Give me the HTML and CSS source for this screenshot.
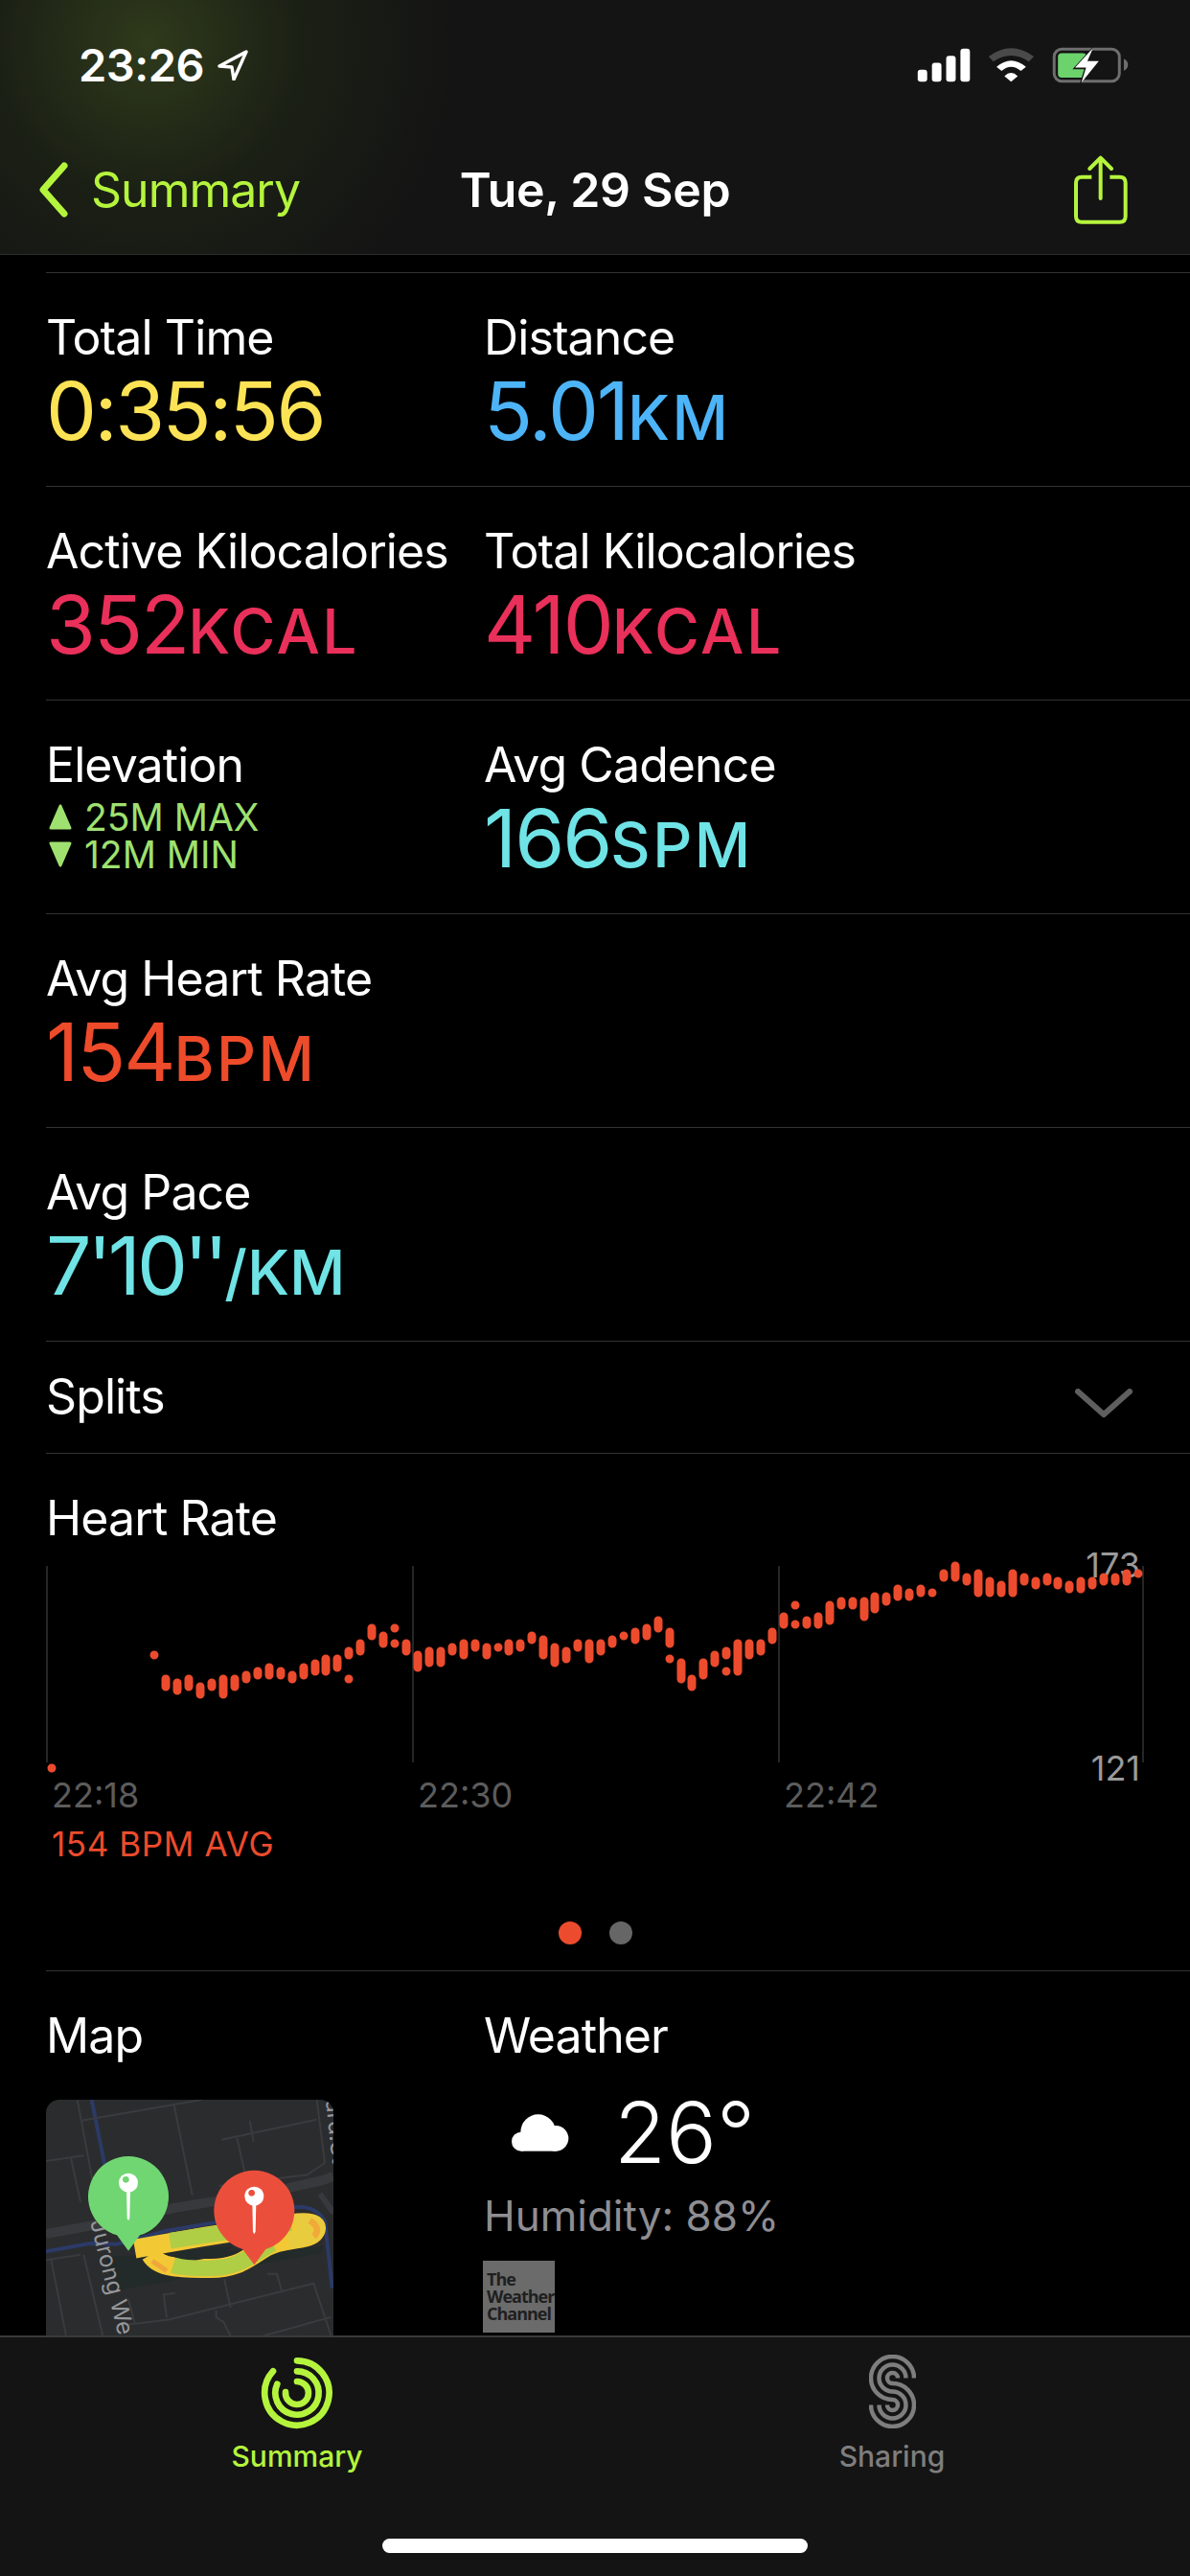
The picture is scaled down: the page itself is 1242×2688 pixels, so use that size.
FILE: index.html
```html
<!DOCTYPE html>
<html lang="en">
<head>
  <meta charset="UTF-8" />
  <meta name="viewport" content="width=device-width, initial-scale=1.0" />
  <title>Workout Summary</title>
  <link rel="stylesheet" href="styles.css">
</head>
<body>
  <div class="screen">
    <header class="top">
      <div class="status">
        <div class="clock">
          <span>23:26</span>
          <svg class="arrow-icon" viewBox="0 0 32 32"><path d="M30 2 L2 17 L15 18 L17 31 Z" fill="none" stroke="#fff" stroke-width="3.4" stroke-linejoin="round"/></svg>
        </div>
        <svg class="status-icons" viewBox="171 85 664 115">
          <rect x="171" y="157" width="30" height="38" rx="9" fill="#fff"/>
          <rect x="216" y="135" width="30" height="60" rx="9" fill="#fff"/>
          <rect x="261" y="113" width="30" height="82" rx="9" fill="#fff"/>
          <rect x="306" y="90" width="30" height="105" rx="9" fill="#fff"/>
          <path d="M395 115 Q466 62 538 115 L522 131 Q466 93 410 131 Z" fill="#4a4a4a"/>
          <path d="M420 148 Q466 108 513 148 L497 161 Q466 135 436 161 Z" fill="#fff"/>
          <path d="M445 177 Q466 157 487 177 L466 195 Z" fill="#fff"/>
          <rect x="602" y="92" width="206" height="101" rx="24" fill="none" stroke="#6e6e6e" stroke-width="9"/>
          <path d="M822 122 Q835 128 835 141 Q835 154 822 160 Z" fill="#6e6e6e"/>
          <rect x="614" y="105" width="90" height="77" rx="12" fill="#6bd26c"/>
          <path d="M727 82 L660 155 L697 155 L682 204 L751 126 L713 126 Z" fill="#141414"/>
          <path d="M725 88 L668 150 L703 150 L688 198 L743 130 L707 130 Z" fill="#fff"/>
        </svg>
      </div>
      <nav class="nav">
        <div class="nav-back">
          <svg class="chevron" viewBox="0 0 34 58"><path d="M28 4 L6 29 L28 54" fill="none" stroke="#b5f43d" stroke-width="7" stroke-linecap="round" stroke-linejoin="round"/></svg>
          <span>Summary</span>
        </div>
        <div class="nav-title">Tue, 29 Sep</div>
        <svg class="share" viewBox="658 420 168 216">
          <path d="M713 488 H682 Q664 488 664 506 V611 Q664 629 682 629 H801 Q819 629 819 611 V506 Q819 488 801 488 H770" fill="none" stroke="#b5f43d" stroke-width="12"/>
          <path d="M741 432 V555 M707 462 L741 428 L775 462" fill="none" stroke="#b5f43d" stroke-width="12" stroke-linecap="round" stroke-linejoin="round"/>
        </svg>
      </nav>
    </header>

    <main class="content">
      <section class="row">
        <div class="cell">
          <div class="label">Total Time</div>
          <div class="value yellow time-value">0:35:56</div>
        </div>
        <div class="cell">
          <div class="label">Distance</div>
          <div class="value blue">5.01<span class="unit">KM</span></div>
        </div>
      </section>

      <section class="row">
        <div class="cell">
          <div class="label">Active Kilocalories</div>
          <div class="value pink">352<span class="unit">KCAL</span></div>
        </div>
        <div class="cell">
          <div class="label">Total Kilocalories</div>
          <div class="value pink">410<span class="unit">KCAL</span></div>
        </div>
      </section>

      <section class="row">
        <div class="cell">
          <div class="label">Elevation</div>
          <div class="elev">
            <svg class="tri" viewBox="0 0 24 27"><path d="M12 2 L22 25 H2 Z" fill="#9fe170" stroke="#9fe170" stroke-width="3" stroke-linejoin="round"/></svg>
            <span>25M MAX</span>
          </div>
          <div class="elev">
            <svg class="tri" viewBox="0 0 24 27"><path d="M2 2 H22 L12 25 Z" fill="#9fe170" stroke="#9fe170" stroke-width="3" stroke-linejoin="round"/></svg>
            <span>12M MIN</span>
          </div>
        </div>
        <div class="cell">
          <div class="label">Avg Cadence</div>
          <div class="value cyan">166<span class="unit">SPM</span></div>
        </div>
      </section>

      <section class="row">
        <div class="cell">
          <div class="label">Avg Heart Rate</div>
          <div class="value orange">154<span class="unit">BPM</span></div>
        </div>
      </section>

      <section class="row">
        <div class="cell">
          <div class="label">Avg Pace</div>
          <div class="value cyan"><span class="pace">7'10''</span><span class="unit pace-unit">/KM</span></div>
        </div>
      </section>

      <section class="row-splits">
        <div class="label">Splits</div>
        <svg class="splits-chevron" viewBox="0 0 60 30"><path d="M3 3 L30 27 L57 3" fill="none" stroke="#5f5f5f" stroke-width="6" stroke-linecap="round" stroke-linejoin="round"/></svg>
      </section>

      <section class="row-heart">
        <div class="label">Heart Rate</div>
        <svg class="chart" viewBox="48 1613 1146 282">
          <path d="M49 1633 V1838 M431 1633 V1838 M813 1633 V1838 M1193 1633 V1838" stroke="#333" stroke-width="1.5" fill="none"/>
          <text class="tick" x="1190" y="1645" text-anchor="end">173</text>
          <text class="tick" x="1190" y="1857" text-anchor="end">121</text>
          <text class="time" x="54" y="1885">22:18</text>
          <text class="time" x="436" y="1885">22:30</text>
          <text class="time" x="818" y="1885">22:42</text>
          <path class="hr" d="M54 1844v0 M161 1726v0 M173 1751V1759 M185 1755V1763 M197 1751V1759 M209 1759V1767 M221 1755V1759 M233 1751V1767 M245 1751V1759 M257 1747V1751 M269 1743V1747 M281 1739V1747 M293 1743V1747 M305 1747V1751 M317 1739V1747 M329 1735V1743 M340 1730V1743 M352 1730V1739 M364 1722V1726 M364 1751v0 M376 1714V1722 M388 1698V1706 M400 1706V1714 M412 1698v0 M412 1714v0 M424 1714V1722 M436 1726V1739 M448 1722V1734 M460 1722V1734 M472 1718V1722 M484 1714V1726 M496 1714V1718 M508 1718V1726 M520 1718v0 M531 1714V1722 M543 1714V1718 M555 1706V1710 M567 1710V1726 M579 1718V1734 M591 1722V1730 M603 1714V1718 M615 1714V1730 M627 1714V1722 M639 1710V1714 M651 1706v0 M663 1702V1710 M675 1698V1706 M687 1690V1698 M699 1702V1714 M699 1730v0 M711 1734V1751 M722 1751V1759 M734 1734V1747 M746 1726V1734 M758 1722V1726 M758 1743v0 M770 1714V1743 M782 1714V1726 M794 1714V1722 M806 1702V1710 M818 1686V1694 M830 1674v0 M830 1694v0 M842 1690V1694 M854 1686V1694 M866 1674V1690 M878 1670V1674 M890 1670V1674 M902 1670V1686 M913 1665V1678 M925 1665V1670 M937 1657V1665 M949 1661V1665 M961 1657V1661 M973 1661v0 M985 1641V1645 M997 1633V1645 M1009 1645V1649 M1021 1641V1661 M1033 1649V1661 M1045 1653V1661 M1057 1641V1661 M1069 1645V1649 M1081 1649V1653 M1093 1645V1649 M1104 1649V1653 M1116 1653V1657 M1128 1649V1657 M1140 1649V1653 M1152 1645V1649 M1164 1645V1649 M1176 1641V1649 M1188 1641v0"/>
        </svg>
        <div class="avg">154 BPM AVG</div>
        <div class="pager">
          <span class="dot on"></span>
          <span class="dot"></span>
        </div>
      </section>

      <section class="row">
        <div class="cell">
          <div class="label">Map</div>
          <svg class="map" viewBox="12 30 900 741">
            <rect x="12" y="30" width="900" height="741" fill="#2b2c2e"/>
            <path d="M200 522 L880 490 L870 510 L430 592 L230 628 Z" fill="#222a2a"/>
            <g fill="none" stroke="#2b3a66" stroke-width="12">
              <path d="M155 30 L196 235"/>
              <path d="M12 505 L150 480 L235 482 L390 440 L540 415 L800 365 Q860 365 885 410 L908 620"/>
            </g>
            <g fill="none" stroke="#38393c" stroke-width="30">
              <path d="M12 450 L150 425 L420 368 L700 322 L880 282 L912 270"/>
              <path d="M870 325 L912 385" stroke-width="18"/>
            </g>
            <g fill="none" stroke="#3a3b3e" stroke-width="6">
              <path d="M110 30 L160 295"/>
              <path d="M125 95 L500 30"/>
              <path d="M412 42 L470 328"/>
              <path d="M12 222 L130 205"/>
              <path d="M90 212 L120 350"/>
              <path d="M562 155 L860 92"/>
              <path d="M650 95 L662 162"/>
              <path d="M610 150 L635 260"/>
              <path d="M860 30 L885 228 L830 265 L555 300"/>
              <path d="M12 532 L120 515"/>
              <path d="M28 530 L75 770"/>
              <path d="M130 515 L190 770"/>
              <path d="M416 635 L380 640 L390 712"/>
              <path d="M260 735 L400 718 L850 605 L905 770"/>
              <path d="M545 690 V712 L568 726 L590 770"/>
              <path d="M570 590 L590 680"/>
              <path d="M705 575 H735 L752 635"/>
              <path d="M270 655 L290 730"/>
              <path d="M690 770 L905 710"/>
            </g>
            <text class="map-text" transform="translate(150 412) rotate(76)">Jurong We</text>
            <text class="map-text" transform="translate(888 32) rotate(84)">ard.St</text>
            <g fill="none">
              <path d="M290 497 C400 478 520 452 780 418 C860 405 868 430 850 448 C825 472 750 462 700 492 C640 528 610 560 520 558 C440 558 365 558 340 515" stroke="#f2c935" stroke-width="60"/>
              <path d="M400 472 C520 452 640 436 780 418 M720 480 C640 528 610 558 520 558 C480 558 440 558 410 548" stroke="#afcd45" stroke-width="50"/>
              <path d="M790 416 C860 405 868 430 850 448 C835 462 800 462 770 470" stroke="#e9cb3e" stroke-width="52"/>
              <path d="M838 408 C866 425 866 445 850 458" stroke="#f1a93a" stroke-width="20"/>
              <path d="M345 535 L390 566" stroke="#f0a73a" stroke-width="16"/>
            </g>
            <path d="M385 512 C460 500 530 492 600 490 C560 510 510 535 470 532 C430 530 405 520 385 512 Z" fill="#222a2a"/>
            <path d="M270 503 L234 454 A126 126 0 1 1 306 454 Z" fill="#70d672"/>
            <circle cx="270" cy="290" r="30" fill="#fff"/>
            <circle cx="262" cy="280" r="10" fill="#70d672"/>
            <path d="M264 310 H276 L274 400 Q270 416 266 400 Z" fill="#fff"/>
            <path d="M664 547 L628 498 A126 126 0 1 1 700 498 Z" fill="#eb4f3b"/>
            <circle cx="664" cy="332" r="30" fill="#fff"/>
            <circle cx="656" cy="322" r="10" fill="#eb4f3b"/>
            <path d="M658 352 H670 L668 442 Q664 458 660 442 Z" fill="#fff"/>
          </svg>
        </div>
        <div class="cell">
          <div class="label">Weather</div>
          <div class="temp-row">
            <svg class="cloud" viewBox="162 490 180 115" fill="#fff">
              <circle cx="192" cy="575" r="30"/>
              <circle cx="245" cy="545" r="55"/>
              <circle cx="300" cy="565" r="40"/>
              <rect x="192" y="560" width="110" height="45"/>
            </svg>
            <span class="temp">26°</span>
          </div>
          <div class="humidity">Humidity: 88%</div>
          <div class="twc">The<br>Weather<br>Channel</div>
        </div>
      </section>
    </main>

    <footer class="tabbar">
      <div class="tabs">
        <div class="tab active">
          <svg class="tab-rings" viewBox="60 48 240 240" fill="none" stroke="#b5f43d" stroke-width="20" stroke-linecap="round">
            <path d="M180 67 A101 101 0 1 1 105 100"/>
            <path d="M180 100 A68 68 0 1 1 118 140"/>
            <path d="M180 132 A36 36 0 1 1 144 165"/>
          </svg>
          <span>Summary</span>
        </div>
        <div class="tab">
          <svg class="tab-share" viewBox="0 0 49 77" fill="none" stroke="#7e7e7e" stroke-width="4.5">
            <path d="M47 24.5 A22.5 22.5 0 1 0 24.5 47 A5.5 5.5 0 1 1 19 52.5"/>
            <path d="M38.5 24.5 A14 14 0 1 0 24.5 38.5 A14 14 0 1 1 10.5 52.5"/>
            <path d="M30 24.5 A5.5 5.5 0 1 0 24.5 30 A22.5 22.5 0 1 1 2 52.5"/>
          </svg>
          <span>Sharing</span>
        </div>
      </div>
      <div class="home"></div>
    </footer>
  </div>
</body>
</html>
```

FILE: styles.css
```css
* { margin: 0; padding: 0; box-sizing: border-box; }
body {
  font-family: Inter, "Noto Sans", sans-serif;
  background: #000;
  color: #fff;
  width: 1242px;
  height: 2688px;
  overflow: hidden;
}
.screen {
  display: flex;
  flex-direction: column;
  height: 2688px;
}

/* top bar */
.top {
  height: 266px;
  flex: none;
  background: radial-gradient(circle 320px at 155px 45px, #2f3a1b 0%, #1b2015 50%, #141414 100%), #141414;
  border-bottom: 1px solid #2c2c2c;
}
.status {
  height: 135px;
  padding: 0 64px 0 82px;
  display: flex;
  justify-content: space-between;
  align-items: center;
}
.clock {
  display: flex;
  align-items: center;
  gap: 14px;
  font-size: 47px;
  font-weight: 600;
  letter-spacing: -0.5px;
}
.arrow-icon { width: 32px; height: 32px; }
.status-icons { width: 221px; height: 38px; }
.nav {
  height: 126px;
  padding: 0 39px;
  display: grid;
  grid-template-columns: 1fr auto 1fr;
  align-items: center;
}
.nav-back {
  display: flex;
  align-items: center;
  gap: 22px;
  color: #b5f43d;
  font-size: 50px;
  letter-spacing: -1px;
}
.chevron { width: 34px; height: 58px; }
.nav-title { font-size: 50px; font-weight: 600; letter-spacing: -0.3px; }
.share { width: 56px; height: 72px; justify-self: end; margin-right: 26px; }

/* scrolling content */
.content {
  flex: 1;
  min-height: 0;
  overflow: hidden;
  padding-top: 18px;
}
.row, .row-splits, .row-heart {
  margin-left: 48px;
  border-top: 1px solid #333;
}
.row {
  height: 223px;
  display: grid;
  grid-template-columns: 457px 1fr;
}
.cell { padding-top: 37px; }
.label {
  font-size: 50px;
  line-height: 60px;
  letter-spacing: -0.9px;
}
.value {
  font-size: 84px;
  line-height: 84px;
  margin-top: 5px;
  letter-spacing: -2px;
}
.time-value { letter-spacing: -2.5px; }
.unit { font-size: 64px; font-weight: 500; letter-spacing: 2.5px; }
.pace { letter-spacing: -4px; }
.pace-unit { letter-spacing: 0; }
.yellow { color: #fce355; }
.blue { color: #4db4f8; }
.pink { color: #e9305a; }
.cyan { color: #6fe3e5; }
.orange { color: #ee4b2b; }

.elev {
  display: flex;
  align-items: center;
  gap: 13px;
  color: #9fe170;
  font-size: 39px;
  line-height: 39px;
  margin-left: 3px;
  position: relative;
  top: -2px;
}
.elev:nth-child(2) { margin-top: 7px; }
.tri { width: 24px; height: 27px; }

.row-splits {
  height: 117px;
  padding: 27px 60px 0 0;
  display: flex;
  justify-content: space-between;
}
.splits-chevron { width: 60px; height: 30px; margin-top: 22px; }

.row-heart {
  height: 540px;
  padding-top: 37px;
}
.chart { display: block; width: 1146px; height: 282px; }
.hr { fill: none; stroke: #ec4c2d; stroke-width: 9; stroke-linecap: round; }
.tick { font-size: 36px; fill: #9a9a9a; }
.time { font-size: 36px; fill: #5c5c5c; }
.avg {
  margin: 8px 0 0 6px;
  font-size: 35px;
  line-height: 40px;
  letter-spacing: 0.6px;
  color: #ec4c2d;
}
.pager {
  margin-top: 61px;
  padding-right: 48px;
  display: flex;
  justify-content: center;
  gap: 29px;
}
.dot { width: 24px; height: 24px; border-radius: 50%; background: #666; }
.dot.on { background: #ec4c2d; }

.map {
  display: block;
  width: 300px;
  height: 247px;
  margin-top: 37px;
  border-radius: 14px 14px 0 0;
}
.map-text { font-size: 72px; fill: #96979a; }
.temp-row { display: flex; align-items: center; margin-top: 27px; }
.cloud { width: 60px; height: 39px; margin: 0 47px 0 29px; }
.temp { font-size: 88px; line-height: 88px; font-weight: 300; }
.humidity {
  margin-top: 18px;
  font-size: 44px;
  line-height: 50px;
  color: #8e8e93;
}
.twc {
  width: 75px;
  height: 75px;
  margin: 22px 0 0 -1px;
  padding: 10px 0 0 4px;
  background: #6b6b6b;
  color: #1f1f1f;
  font-family: "Open Sans", sans-serif;
  font-weight: 700;
  font-size: 18px;
  line-height: 18px;
  letter-spacing: -1px;
}

/* tab bar */
.tabbar {
  height: 251px;
  flex: none;
  background: #141414;
  border-top: 2px solid #3a3a3a;
  position: relative;
}
.tabs {
  display: grid;
  grid-template-columns: 620px 622px;
}
.tab {
  display: flex;
  flex-direction: column;
  align-items: center;
  padding-top: 18px;
  color: #7e7e7e;
  font-size: 30px;
  line-height: 36px;
  font-weight: 500;
}
.tab.active { color: #b5f43d; }
.tab-rings { width: 80px; height: 80px; margin-bottom: 8px; }
.tab-share { width: 49px; height: 77px; margin-bottom: 11px; }
.home {
  position: absolute;
  left: 399px;
  bottom: 24px;
  width: 444px;
  height: 15px;
  border-radius: 8px;
  background: #fff;
}
```
